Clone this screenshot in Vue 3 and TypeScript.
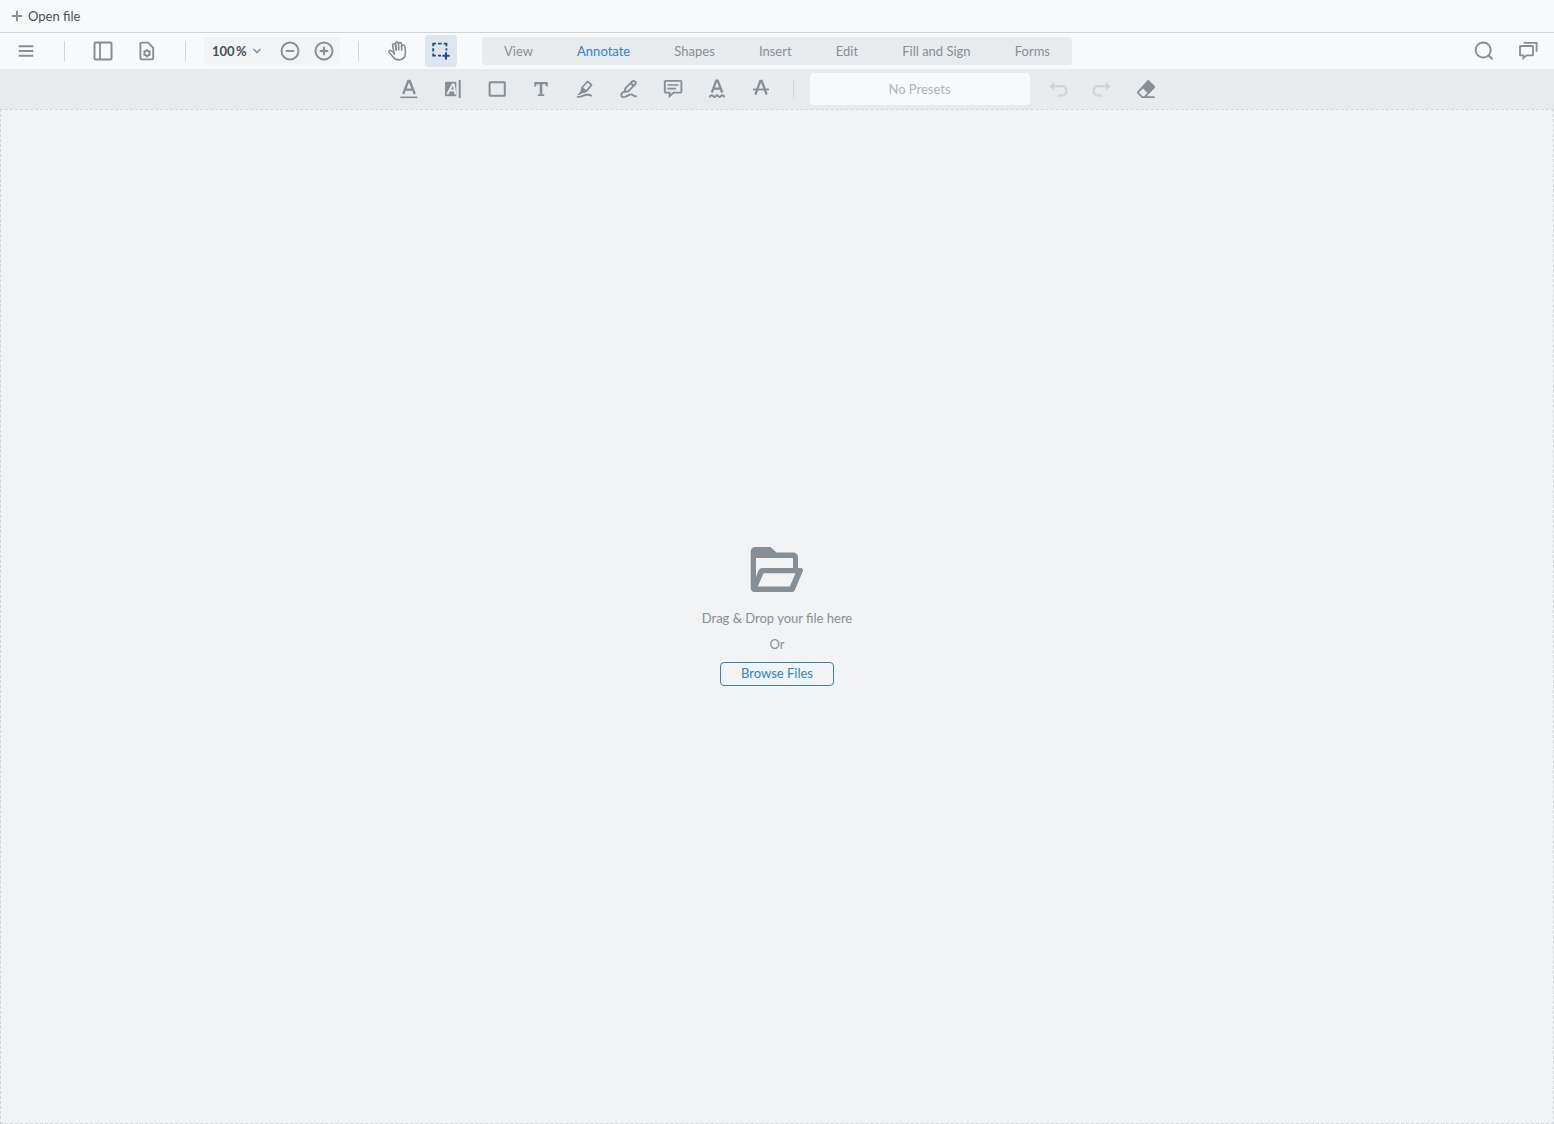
<script setup lang="ts">
import { ref } from 'vue'

interface Tool {
  icon: string
  label: string
}

const tabs = ['View', 'Annotate', 'Shapes', 'Insert', 'Edit', 'Fill and Sign', 'Forms']
const activeTab = ref('Annotate')
const zoom = ref('100')

const tools: Tool[] = [
  { icon: 'underline', label: 'Underline' },
  { icon: 'freetext', label: 'Highlight text' },
  { icon: 'rectangle', label: 'Rectangle' },
  { icon: 'text', label: 'Free text' },
  { icon: 'highlighter', label: 'Freehand highlight' },
  { icon: 'pencil', label: 'Freehand' },
  { icon: 'note', label: 'Note' },
  { icon: 'squiggly', label: 'Squiggly' },
  { icon: 'strikeout', label: 'Strikeout' },
]
</script>

<template>
  <div class="app">
    <svg class="sprite" aria-hidden="true">
      <symbol id="plus" viewBox="0 0 12 12">
        <path d="M6 .8v10.400M.8 6h10.400" stroke-width="2" />
      </symbol>
      <symbol id="menu" viewBox="0 0 24 24">
        <path d="M4.700 7.200h14.600M4.700 12h14.600M4.700 16.800h14.600" stroke-width="1.900" />
      </symbol>
      <symbol id="panel" viewBox="0 0 24 24">
        <rect x="3.500" y="3.600" width="17" height="16.800" rx="1.200" stroke-width="2" />
        <path d="M9 3.600v16.800" stroke-width="1.800" />
      </symbol>
      <symbol id="page-settings" viewBox="0 0 24 24">
        <path d="M6.600 3.600H13l5.200 5.200v10.400a1.200 1.200 0 0 1-1.200 1.200H6.600a1.200 1.200 0 0 1-1.200-1.200V4.800a1.200 1.200 0 0 1 1.200-1.200z" stroke-width="1.900" />
        <circle cx="12" cy="14.200" r="2.500" stroke-width="1.700" />
        <path d="M12 10.200v1.400M12 16.800v1.400M8.500 12.200l1.200.7M14.300 15.500l1.200.7M15.500 12.200l-1.200.7M9.700 15.500l-1.200.7" stroke-width="2" />
      </symbol>
      <symbol id="chevron" viewBox="0 0 8 6">
        <path d="M.6 1 4 4.600 7.400 1" stroke-width="1.500" />
      </symbol>
      <symbol id="zoom-out" viewBox="0 0 24 24">
        <circle cx="12" cy="12" r="8.500" stroke-width="1.900" />
        <path d="M7.700 12h8.600" stroke-width="1.900" />
      </symbol>
      <symbol id="zoom-in" viewBox="0 0 24 24">
        <circle cx="12" cy="12" r="8.500" stroke-width="1.900" />
        <path d="M7.700 12h8.600M12 7.700v8.600" stroke-width="1.900" />
      </symbol>
      <symbol id="hand" viewBox="0 0 24 24">
        <g stroke-width="1.600" stroke-linecap="round" stroke-linejoin="round">
          <path d="M9.200 15.200 7.600 6.400c-.4-1.900 2.300-2.300 2.700-.5l1 5.100" />
          <path d="m11.300 10.800-.6-6.300c-.1-1.900 2.700-1.900 2.800 0l.3 6.300" />
          <path d="M13.600 5c0-1.900 2.900-1.900 2.900 0l.2 6.300" />
          <path d="M16.600 7.300c.1-1.800 3.100-1.700 3.200.1.300 2.500.8 4.800.6 7.300-.4 3.800-3 6.200-6.500 6.200-2.600 0-4.400-1-5.800-2.900l-3.800-4.400c-1.100-1.400.3-2.700 1.600-2l3.300 2.200" />
        </g>
      </symbol>
      <symbol id="marquee" viewBox="0 0 24 24">
        <path d="M4.200 7.200V4.600h2.700M9 4.600h3.600M14.700 4.600h2.700v2.700M17.400 9.200v2.300M4.200 9.200v3.300M4.200 14.400v2.200h2.700M9 16.600h3" stroke-width="1.800" />
        <path d="M17 13.200v7.200M13.400 16.800h7.200" stroke-width="2" />
      </symbol>
      <symbol id="underline" viewBox="0 0 24 24">
        <path d="M6.200 17 11.300 4h1.400l5.100 13M8 12.700h8" stroke-width="2.300" />
        <path d="M3.400 20.300h17" stroke-width="1.600" />
      </symbol>
      <symbol id="freetext" viewBox="0 0 24 24">
        <rect class="solid" x="4" y="4.700" width="11.300" height="14.600" rx="1" />
        <path class="knockout" d="M6.300 17.300 11.600 7.500h1.200l1.700 9.800M8.600 13.500h5" stroke-width="1.900" />
        <path d="M18.700 3v18" stroke-width="2" />
      </symbol>
      <symbol id="rectangle" viewBox="0 0 24 24">
        <rect x="4.600" y="5.200" width="15.200" height="13.600" rx=".6" stroke-width="2" />
      </symbol>
      <symbol id="text" viewBox="0 0 24 24">
        <path class="solid" d="M5.300 5h13.400v4.400h-1.700l-.6-2.200h-3.100v10.100l2 .3V19H8.700v-1.400l2-.3V7.200H7.600L7 9.400H5.300z" />
      </symbol>
      <symbol id="highlighter" viewBox="0 0 24 24">
        <path d="m9.300 10.200 5.200-5.700 4.100 3.400-5 6-4.600 1.200z" stroke-width="1.700" stroke-linejoin="round" />
        <path class="solid" d="m8.700 9.300 5.600 4.800-2 1.700-2.900.4-2.600 1.600-2.400.2 2.900-3.400z" />
        <path d="M4 19.600c2.600.9 4.200.1 6.300-1 2-1 3.600-1 5.200-.8 1.300.2 2.200.7 3.300 1.200" stroke-width="1.900" />
      </symbol>
      <symbol id="pencil" viewBox="0 0 24 24">
        <path d="m7.600 14.900.9-3.700 6.700-6.700c1.800-1.700 4.700 1.100 3 2.900l-6.800 6.800zM13.700 6l3 3" stroke-width="1.900" stroke-linejoin="round" />
        <path d="M7.700 14.600c-2.200.6-3.500 2-3.500 3.700 0 2.100 2.600 2.200 4.800 1.200 2.700-1.200 3.800-2.300 5.500-2.100 1.800.2 1.600 2 5.300 1.800" stroke-width="1.900" />
      </symbol>
      <symbol id="note" viewBox="0 0 24 24">
        <path d="M4.700 3.900h14.800c.5 0 .9.400.9.900v9.900c0 .5-.4.900-.9.900h-6.900l-4 3.500v-3.500H4.700c-.5 0-.9-.4-.9-.9V4.800c0-.5.400-.9.900-.9z" stroke-width="1.900" />
        <path d="M6.400 8h11.200M6.400 11.600h8.800" stroke-width="1.700" />
      </symbol>
      <symbol id="squiggly" viewBox="0 0 24 24">
        <path d="M6.800 15.500 11.300 3.700h1.400l4.500 11.800M8.300 11.600h7.400" stroke-width="2.300" />
        <path d="M4 19.700c1.300 0 1.300-1.400 2.700-1.400s1.400 1.700 2.700 1.700 1.300-1.700 2.600-1.700 1.400 1.700 2.700 1.700 1.300-1.700 2.600-1.700 1.400 1.400 2.700 1.400" stroke-width="1.900" />
      </symbol>
      <symbol id="strikeout" viewBox="0 0 24 24">
        <path d="M6.400 17.600 11.300 3.900h1.400l4.900 13.700" stroke-width="2.300" />
        <path d="M4 12.500h16" stroke-width="1.800" />
      </symbol>
      <symbol id="undo" viewBox="0 0 24 24">
        <path class="solid" d="M3 9.200 8.300 5v8.400z" />
        <path d="M7.500 9.200h8.300c2.800 0 4.500 1.900 4.500 4.600s-1.700 4.900-4.500 4.900h-3.900" stroke-width="2.200" />
      </symbol>
      <symbol id="redo" viewBox="0 0 24 24">
        <path class="solid" d="M21 9.200 15.700 5v8.400z" />
        <path d="M16.500 9.200H8.200c-2.800 0-4.500 1.900-4.500 4.600s1.700 4.900 4.500 4.900h3.900" stroke-width="2.200" />
      </symbol>
      <symbol id="eraser" viewBox="0 0 24 24">
        <path class="solid" fill-rule="evenodd" d="M13.300 3.400a1.300 1.300 0 0 1 1.800 0l5.700 5.700a1.300 1.300 0 0 1 0 1.800L12.600 19.200h8v1.800H7.800L3.400 16.600a1.600 1.600 0 0 1 0-2.200zM4.900 15.500l3.700 3.700h1.500l3.300-3.300-4.300-4.300z" />
      </symbol>
      <symbol id="search" viewBox="0 0 24 24">
        <circle cx="11.200" cy="11" r="7.500" stroke-width="1.900" />
        <path d="m16.500 16.300 4 4" stroke-width="2.200" />
      </symbol>
      <symbol id="comments" viewBox="0 0 24 24">
        <path d="M4.500 7h12c.3 0 .5.200.5.500v8.400c0 .3-.2.500-.5.500h-5.900l-3.200 2.700v-2.700H4.500c-.3 0-.5-.2-.5-.5V7.500c0-.3.200-.5.500-.5z" stroke-width="1.800" />
        <path d="M7.600 3.800h13v9" stroke-width="1.800" />
      </symbol>
      <symbol id="folder" viewBox="0 0 64 64">
        <path class="solid" fill-rule="evenodd" d="M10 9h15.500l6 5.500H48a5 5 0 0 1 5 5V30h2.500c2 0 3 1.500 2.300 3.200l-8 19A3 3 0 0 1 47 54H9.500A3.800 3.800 0 0 1 5.700 50V14A5 5 0 0 1 10 9zm1 11v19l2.500-6.500A4 4 0 0 1 17 30h31V20zm7.500 15.300-5.700 13.200h32l5.700-13.200z" />
      </symbol>
    </svg>

    <div class="file-bar">
      <button class="open-file" type="button">
        <svg class="plus-icon" aria-hidden="true"><use href="#plus" /></svg>
        Open file
      </button>
    </div>

    <header class="header">
      <button class="icon-button" type="button" aria-label="Menu">
        <svg class="icon"><use href="#menu" /></svg>
      </button>
      <span class="divider"></span>
      <button class="icon-button" type="button" aria-label="Panel">
        <svg class="icon"><use href="#panel" /></svg>
      </button>
      <button class="icon-button" type="button" aria-label="View controls">
        <svg class="icon"><use href="#page-settings" /></svg>
      </button>
      <span class="divider divider-zoom"></span>
      <div class="zoom">
        <input v-model="zoom" class="zoom-value" type="text" aria-label="Set zoom" />
        <span class="percent">%</span>
        <button class="zoom-menu" type="button" aria-label="Zoom options">
          <svg class="chevron"><use href="#chevron" /></svg>
        </button>
        <button class="zoom-step" type="button" aria-label="Zoom out">
          <svg class="icon"><use href="#zoom-out" /></svg>
        </button>
        <button class="zoom-step" type="button" aria-label="Zoom in">
          <svg class="icon"><use href="#zoom-in" /></svg>
        </button>
      </div>
      <span class="divider divider-tools"></span>
      <button class="icon-button" type="button" aria-label="Pan">
        <svg class="icon"><use href="#hand" /></svg>
      </button>
      <button class="icon-button selected" type="button" aria-label="Select" aria-pressed="true">
        <svg class="icon"><use href="#marquee" /></svg>
      </button>
      <nav class="tabs">
        <button
          v-for="tab in tabs"
          :key="tab"
          class="tab"
          :class="{ active: tab === activeTab }"
          type="button"
          @click="activeTab = tab"
        >
          {{ tab }}
        </button>
      </nav>
      <div class="header-end">
        <button class="icon-button" type="button" aria-label="Search">
          <svg class="icon"><use href="#search" /></svg>
        </button>
        <button class="icon-button" type="button" aria-label="Comments">
          <svg class="icon"><use href="#comments" /></svg>
        </button>
      </div>
    </header>

    <div class="toolbar">
      <button
        v-for="tool in tools"
        :key="tool.icon"
        class="icon-button"
        type="button"
        :aria-label="tool.label"
      >
        <svg class="icon"><use :href="'#' + tool.icon" /></svg>
      </button>
      <span class="toolbar-divider"></span>
      <div class="presets">No Presets</div>
      <button class="icon-button" type="button" aria-label="Undo" disabled>
        <svg class="icon"><use href="#undo" /></svg>
      </button>
      <button class="icon-button" type="button" aria-label="Redo" disabled>
        <svg class="icon"><use href="#redo" /></svg>
      </button>
      <button class="icon-button" type="button" aria-label="Eraser">
        <svg class="icon"><use href="#eraser" /></svg>
      </button>
    </div>

    <main class="drop-zone">
      <svg class="folder" aria-hidden="true"><use href="#folder" /></svg>
      <p class="hint">Drag &amp; Drop your file here</p>
      <p class="hint">Or</p>
      <button class="browse" type="button">Browse Files</button>
    </main>
  </div>
</template>

<style>
body {
  margin: 0;
}
</style>

<style scoped>
.app {
  box-sizing: border-box;
  display: flex;
  flex-direction: column;
  min-height: 100vh;
  background: #f1f3f5;
  color: #868e96;
  font-family: Lato, sans-serif;
  font-size: 13px;
  line-height: 16px;
}

.app *,
.app *::before {
  box-sizing: border-box;
}

.sprite {
  position: absolute;
  width: 0;
  height: 0;
}

svg {
  display: block;
  fill: none;
  stroke: currentColor;
}

.solid {
  fill: currentColor;
  stroke: none;
}

.knockout {
  stroke: #e7ebee;
}

button {
  display: flex;
  align-items: center;
  justify-content: center;
  padding: 0;
  border: 0;
  background: transparent;
  color: inherit;
  font: inherit;
  cursor: pointer;
}

.file-bar {
  display: flex;
  align-items: center;
  height: 33px;
  padding: 0 11px;
  border-bottom: 1px solid #cfd4da;
  background: #f8f9fa;
}

.open-file {
  gap: 5px;
  color: #485056;
}

.plus-icon {
  width: 12px;
  height: 12px;
  color: #868e96;
}

.header {
  display: flex;
  align-items: center;
  height: 36px;
  padding: 0 10px;
  background: #f8f9fa;
}

.icon-button {
  flex: none;
  width: 32px;
  height: 32px;
  border-radius: 4px;
}

.icon-button + .icon-button {
  margin-left: 12px;
}

.icon {
  width: 24px;
  height: 24px;
}

.selected {
  background: #dde6ee;
  color: #1b4e7a;
}

.icon-button:disabled {
  color: #cfd4da;
  cursor: default;
}

.divider,
.toolbar-divider {
  flex: none;
  width: 1px;
  height: 20px;
  margin: 0 22px;
  background: #cfd4da;
}

.divider-zoom {
  margin-right: 18px;
}

.divider-tools {
  margin-left: 18px;
}

.zoom {
  display: flex;
  flex: none;
  align-items: center;
  height: 28px;
  padding: 0 4px 0 8px;
  border-radius: 4px;
  background: #f1f3f5;
  color: #485056;
  font-weight: 700;
}

.zoom-value {
  width: 24px;
  padding: 0;
  border: 0;
  outline: 0;
  background: transparent;
  color: inherit;
  font: inherit;
}

.percent {
  width: 11px;
}

.zoom-menu {
  width: 19px;
  height: 28px;
  margin-right: 12px;
  color: #868e96;
}

.chevron {
  width: 8px;
  height: 6px;
}

.zoom-step {
  width: 24px;
  height: 28px;
  color: #868e96;
}

.zoom-step + .zoom-step {
  margin-left: 10px;
}

.tabs {
  display: flex;
  flex: none;
  justify-content: space-between;
  width: 590px;
  height: 28px;
  margin-left: 25px;
  border-radius: 4px;
  background: #e7ebee;
}

.tab {
  padding: 0 22px;
}

.tab.active {
  color: #3183c8;
}

.header-end {
  display: flex;
  margin-left: auto;
}

.toolbar {
  display: flex;
  align-items: center;
  justify-content: center;
  height: 40px;
  background: #e7ebee;
}

.toolbar-divider {
  margin: 0 16px;
}

.presets {
  display: flex;
  align-items: center;
  justify-content: center;
  width: 220px;
  height: 32px;
  margin-right: 12px;
  border-radius: 4px;
  background: #f8f9fa;
  color: #adb5bd;
}

.drop-zone {
  display: flex;
  flex: 1;
  flex-direction: column;
  align-items: center;
  justify-content: center;
  padding-bottom: 10px;
  border: 1px dashed #cfd4da;
}

.folder {
  width: 64px;
  height: 64px;
  margin-bottom: 8px;
}

.hint {
  margin: 0 0 10px;
}

.browse {
  width: 114px;
  height: 24px;
  padding-bottom: 2px;
  border: 1px solid #3183c8;
  border-radius: 4px;
  color: #3183c8;
}
</style>
